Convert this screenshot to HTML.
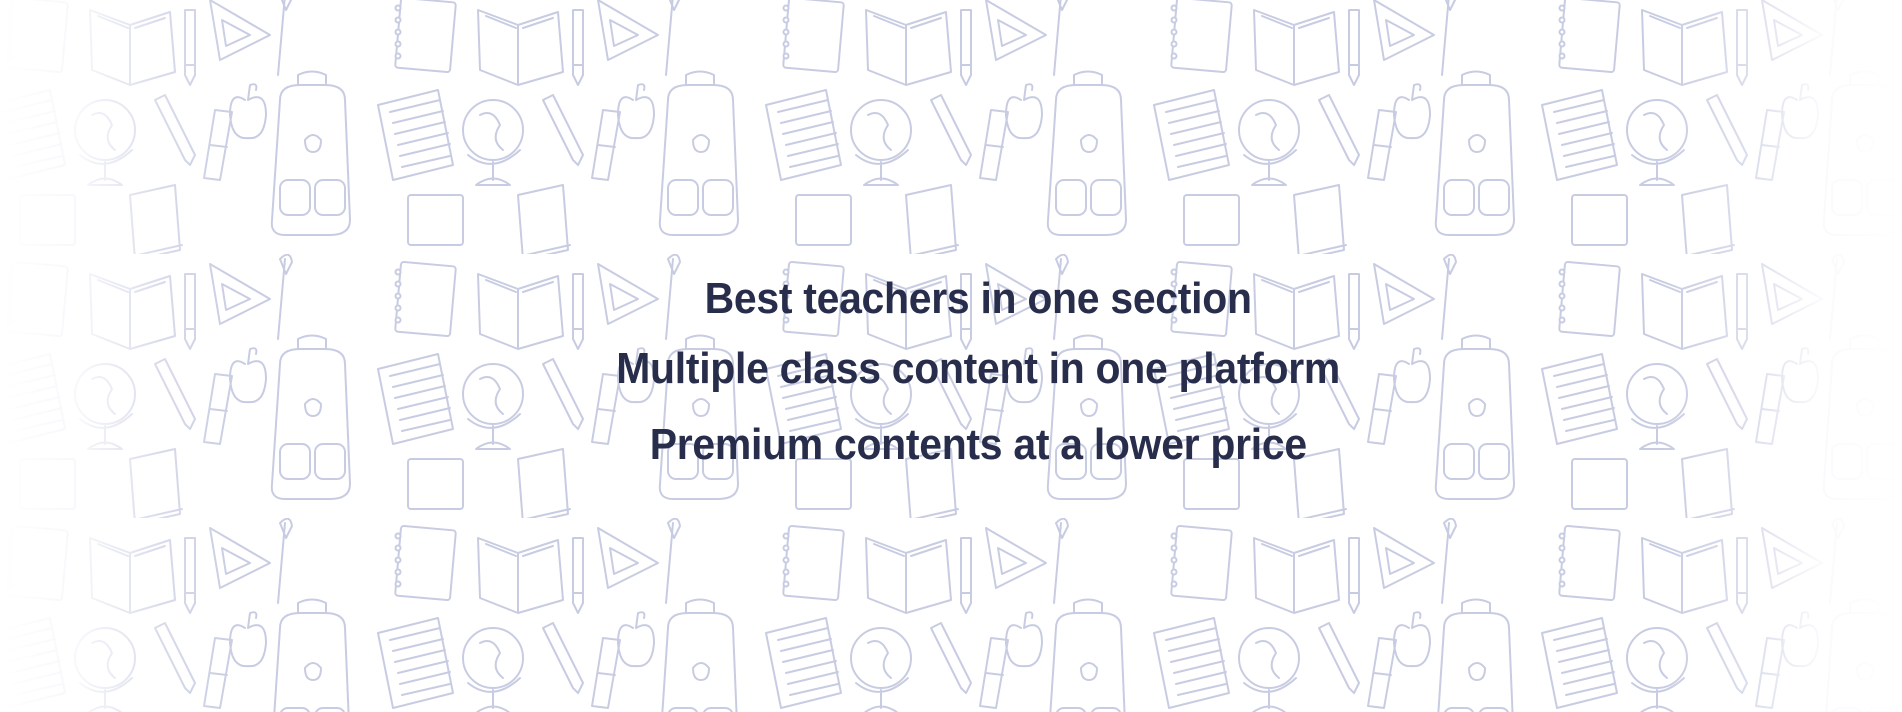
<!DOCTYPE html>
<html><head><meta charset="utf-8"><style>
html,body{margin:0;padding:0;width:1902px;height:712px;overflow:hidden;background:#fff}
.bg{position:absolute;inset:0}
.fade{position:absolute;inset:0;background:linear-gradient(90deg,#fff 0px,rgba(255,255,255,.85) 80px,rgba(255,255,255,.3) 160px,rgba(255,255,255,0) 240px,rgba(255,255,255,0) 1660px,rgba(255,255,255,.4) 1760px,rgba(255,255,255,.9) 1820px,#fff 1902px)}
.t{position:absolute;left:54px;width:1848px;text-align:center;font-family:"Liberation Sans",sans-serif;font-weight:bold;font-size:44px;color:#272d4a;letter-spacing:-0.3px}
.t span{display:inline-block;transform:scaleX(0.93);transform-origin:center}
</style></head><body>
<svg class="bg" width="1902" height="712" xmlns="http://www.w3.org/2000/svg">
<defs>
<pattern id="p" width="388" height="264" patternUnits="userSpaceOnUse" x="-20" y="-10">
<g fill="none" stroke="#c8cce2" stroke-width="2" stroke-linejoin="round" stroke-linecap="round">
<rect x="30" y="10" width="55" height="70" rx="3" transform="rotate(5 57 45)"/>
<g fill="#fff"><circle cx="30" cy="18" r="2.5"/><circle cx="30" cy="30" r="2.5"/><circle cx="30" cy="42" r="2.5"/><circle cx="30" cy="54" r="2.5"/><circle cx="30" cy="66" r="2.5"/></g>
<path d="M110 20 L150 35 L150 95 L112 80 Z M150 35 L190 22 L195 82 L150 95"/>
<path d="M118 26 L148 38 M155 38 L185 28"/>
<path d="M205 20 L215 20 L215 85 L210 95 L205 85 Z M205 75 L215 75"/>
<path d="M230 10 L290 45 L240 70 Z M242 30 L270 45 L246 56 Z"/>
<path d="M305 5 L298 85 M300 5 Q310 -5 312 8 L306 20 Z"/>
<path d="M265 110 Q250 100 250 125 Q252 150 268 148 Q284 150 286 125 Q286 100 268 110 M268 110 L270 95 Q278 92 276 100"/>
<path d="M10 115 L70 100 L85 175 L25 190 Z"/>
<path d="M22 122 L72 110 M25 133 L75 121 M27 144 L77 132 M30 155 L80 143 M32 166 L82 154 M34 177 L82 166"/>
<circle cx="125" cy="140" r="30"/>
<path d="M100 165 Q125 185 152 160 M125 172 L125 190 M108 195 Q125 182 142 195 Z M112 125 Q125 118 132 135 Q122 150 135 160"/>
<path d="M175 110 L185 105 L215 165 L210 175 L205 170 Z"/>
<path d="M235 120 L252 122 L240 190 L224 188 Z M230 155 L247 157"/>
<path d="M300 110 Q300 95 320 95 L345 95 Q365 95 365 110 L370 230 Q370 245 350 245 L305 245 Q290 245 292 230 Z"/>
<path d="M318 95 L318 85 Q332 78 346 85 L346 95 M325 150 Q333 140 341 150 Q341 162 333 162 Q325 162 325 150 Z"/>
<rect x="300" y="190" width="30" height="35" rx="8"/><rect x="335" y="190" width="30" height="35" rx="8"/>
<path d="M150 205 L195 195 L200 260 L155 270 Z M158 265 L202 255"/>
<rect x="40" y="205" width="55" height="50" rx="3"/>
</g>
</pattern>
</defs>
<rect width="1902" height="712" fill="url(#p)"/>
</svg>
<div class="fade"></div>
<div class="t" style="top:274px"><span>Best teachers in one section</span></div>
<div class="t" style="top:344px"><span>Multiple class content in one platform</span></div>
<div class="t" style="top:420px"><span>Premium contents at a lower price</span></div>
</body></html>
